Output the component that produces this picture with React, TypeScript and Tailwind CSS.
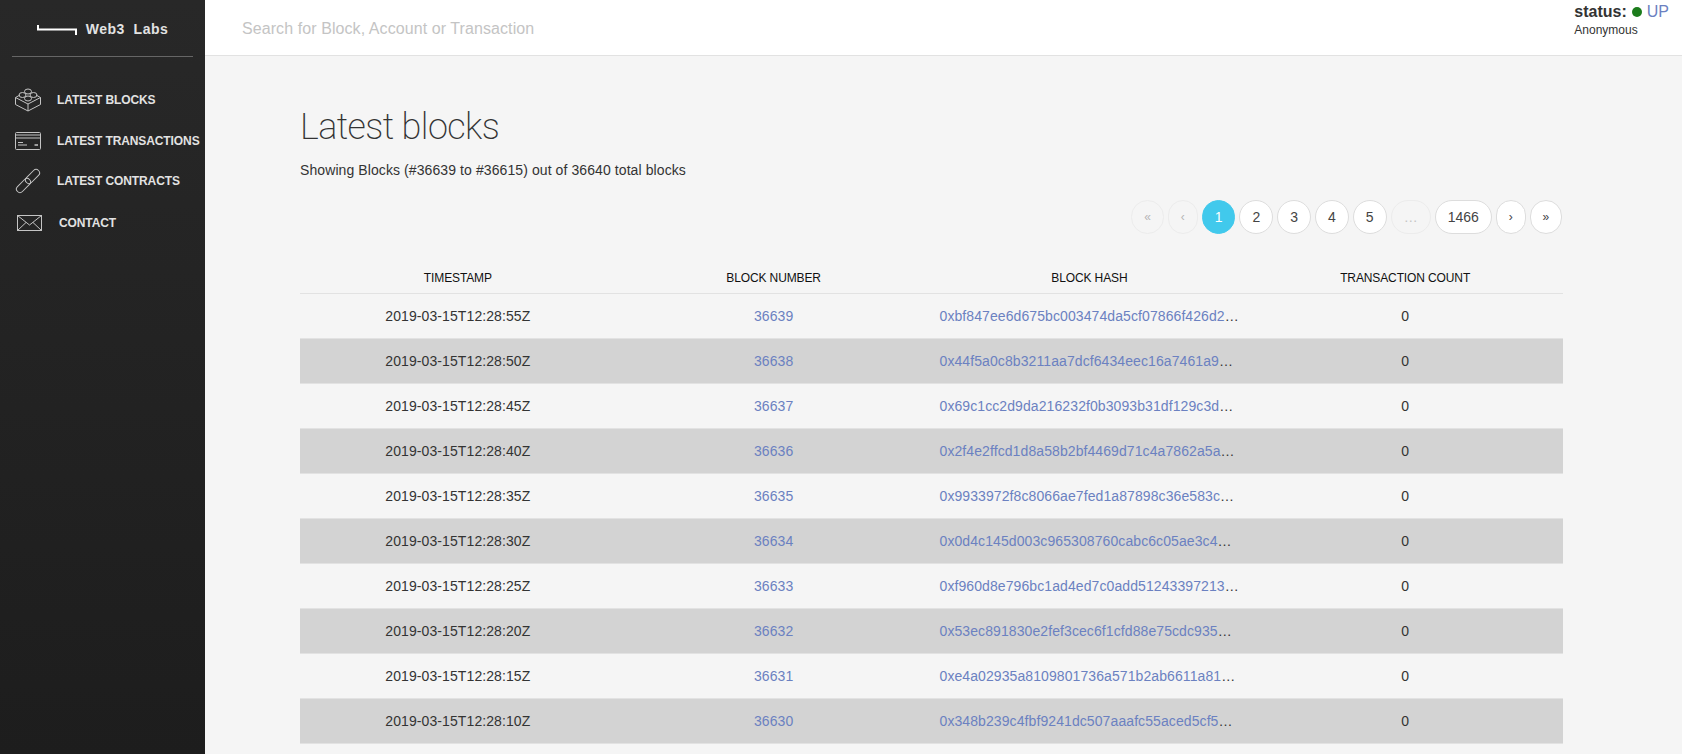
const blocks = [
  { time: "2019-03-15T12:28:55Z", number: 36639, hash: "0xbf847ee6d675bc003474da5cf07866f426d2" },
  { time: "2019-03-15T12:28:50Z", number: 36638, hash: "0x44f5a0c8b3211aa7dcf6434eec16a7461a9" },
  { time: "2019-03-15T12:28:45Z", number: 36637, hash: "0x69c1cc2d9da216232f0b3093b31df129c3d" },
  { time: "2019-03-15T12:28:40Z", number: 36636, hash: "0x2f4e2ffcd1d8a58b2bf4469d71c4a7862a5a" },
  { time: "2019-03-15T12:28:35Z", number: 36635, hash: "0x9933972f8c8066ae7fed1a87898c36e583c" },
  { time: "2019-03-15T12:28:30Z", number: 36634, hash: "0x0d4c145d003c965308760cabc6c05ae3c4" },
  { time: "2019-03-15T12:28:25Z", number: 36633, hash: "0xf960d8e796bc1ad4ed7c0add51243397213" },
  { time: "2019-03-15T12:28:20Z", number: 36632, hash: "0x53ec891830e2fef3cec6f1cfd88e75cdc935" },
  { time: "2019-03-15T12:28:15Z", number: 36631, hash: "0xe4a02935a8109801736a571b2ab6611a81" },
  { time: "2019-03-15T12:28:10Z", number: 36630, hash: "0x348b239c4fbf9241dc507aaafc55aced5cf5" },
];

function BrickIcon() {
  return (
    <svg width="28" height="24" viewBox="0 0 28 24" fill="none" stroke="#c4c4c4" strokeWidth="1">
      <path d="M1.500 9.500 14 16l12.500-6.500" />
      <path d="M1.500 9.500v7L14 23l12.500-6.500v-7" />
      <path d="M14 16v7" />
      <path d="M1.500 9.500 6 7M26.500 9.500 22 7" />
      <ellipse cx="14" cy="3.500" rx="3.500" ry="2.500" />
      <ellipse cx="8.500" cy="7" rx="3.500" ry="2.500" />
      <ellipse cx="19.500" cy="7" rx="3.500" ry="2.500" />
      <ellipse cx="14" cy="10.500" rx="3.500" ry="2.500" />
    </svg>
  );
}

function CardIcon() {
  return (
    <svg width="26" height="18" viewBox="0 0 26 18" fill="none" stroke="#c4c4c4" strokeWidth="1">
      <rect x="0.500" y="0.500" width="25" height="17" rx="1" />
      <path d="M0.500 3h25M0.500 6h25" />
      <path d="M3 10.500h5M3 13h9" />
      <path d="M19.500 13h3.500" strokeWidth="1.500" />
    </svg>
  );
}

function LinkIcon() {
  return (
    <svg width="26" height="26" viewBox="0 0 26 26" fill="none" stroke="#c4c4c4" strokeWidth="1">
      <rect x="-8.500" y="-3.500" width="17" height="7" rx="3.500" transform="translate(8.500 17.500) rotate(-45)" />
      <rect x="-8.500" y="-3.500" width="17" height="7" rx="3.500" transform="translate(17.500 8.500) rotate(-45)" />
    </svg>
  );
}

function MailIcon() {
  return (
    <svg width="25" height="16" viewBox="0 0 25 16" fill="none" stroke="#c4c4c4" strokeWidth="1">
      <rect x="0.500" y="0.500" width="24" height="15" />
      <path d="M0.500 0.500 12.500 10l12-9.500" />
      <path d="M0.500 15.500 9 7.500M24.500 15.500 16 7.500" />
    </svg>
  );
}

function NavItem({ icon, label, className }: { icon: React.ReactNode; label: string; className: string }) {
  return (
    <a className={`flex items-center text-[12px] font-bold tracking-[-0.1px] text-[#e2e2e2] whitespace-nowrap ${className}`}>
      <span className="flex w-[29px] justify-center">{icon}</span>
      <span>{label}</span>
    </a>
  );
}

function PageButton({ label, kind }: { label: string; kind?: "active" | "disabled" | "small" | "smallDisabled" }) {
  const styles = {
    active: "px-[12px] bg-[#41c9ec] border-[#41c9ec] text-white text-[14px]",
    disabled: "px-[12px] bg-[#f5f5f5] border-[#ececec] text-[#c4c4c4] text-[14px]",
    small: "px-[11.875px] bg-white border-[#dddddd] text-[#444444] text-[12px]",
    smallDisabled: "px-[11.875px] bg-[#f5f5f5] border-[#ececec] text-[#b5b5b5] text-[12px]",
  };
  return (
    <span
      className={`flex h-[34px] items-center justify-center rounded-full border ${
        kind ? styles[kind] : "px-[12px] bg-white border-[#dddddd] text-[#444444] text-[14px]"
      }`}
    >
      {label}
    </span>
  );
}

export default function App() {
  return (
    <div className="flex h-[754px] overflow-hidden bg-white pr-[3px] font-['Liberation_Sans',Arial,sans-serif] text-[14px] text-[#333333]">
      <aside className="h-full w-[205px] shrink-0 bg-gradient-to-b from-[#282828] to-[#1d1d1d]">
        <div className="mx-[12px] flex h-[57px] items-center justify-center gap-[9px] border-b border-[#666666] pr-[3px] pt-[3px]">
          <svg width="40" height="12" viewBox="0 0 40 12" fill="none" stroke="#ffffff" strokeWidth="2" className="ml-[3px] mt-[1px]">
            <path d="M1 1v4.500h38V11" />
          </svg>
          <span className="whitespace-pre text-[14px] font-bold tracking-[0.5px] text-[#e2e2e2]">Web3  Labs</span>
        </div>
        <nav className="mt-[22px] flex flex-col pl-[13px]">
          <NavItem icon={<BrickIcon />} label="LATEST BLOCKS" className="h-[41px] gap-[15px]" />
          <NavItem icon={<CardIcon />} label="LATEST TRANSACTIONS" className="h-[41px] gap-[15px]" />
          <NavItem icon={<LinkIcon />} label="LATEST CONTRACTS" className="h-[40px] gap-[15px]" />
          <NavItem icon={<MailIcon />} label="CONTACT" className="mt-[1px] h-[41px] gap-[15px] pl-[2px]" />
        </nav>
      </aside>

      <main className="flex h-full min-w-0 flex-1 flex-col overflow-hidden bg-[#f5f5f5]">
        <header className="flex h-[56px] shrink-0 items-start justify-between border-b border-[#e2e2e2] bg-white">
          <div className="pl-[37px] pt-[19px] text-[16px] leading-[20px] tracking-[0.08px] text-[#c4c4c4]">
            Search for Block, Account or Transaction
          </div>
          <div className="pr-[13px] pt-[3px]">
            <div className="flex items-center text-[16px] leading-[18px]">
              <span className="font-bold text-[#333333]">status:</span>
              <span className="ml-[5px] h-[10px] w-[10px] rounded-full bg-[#1c7c1c]" />
              <span className="ml-[5px] text-[#6b81c1]">UP</span>
            </div>
            <div className="mt-[1px] text-[12px] leading-[16px] text-[#333333]">Anonymous</div>
          </div>
        </header>

        <section className="pl-[95px] pr-[119px]">
          <h1 className="pt-[46px] font-['Roboto',sans-serif] text-[36px] font-extralight leading-[50px] tracking-[-0.6px] text-[#333333]">
            Latest blocks
          </h1>
          <p className="mt-[8px] leading-[20px] tracking-[0.09px]">Showing Blocks (#36639 to #36615) out of 36640 total blocks</p>

          <div className="mr-[1px] mt-[20px] flex justify-end gap-[4px]">
            <PageButton label="«" kind="smallDisabled" />
            <PageButton label="‹" kind="smallDisabled" />
            <PageButton label="1" kind="active" />
            <PageButton label="2" />
            <PageButton label="3" />
            <PageButton label="4" />
            <PageButton label="5" />
            <PageButton label="…" kind="disabled" />
            <PageButton label="1466" />
            <PageButton label="›" kind="small" />
            <PageButton label="»" kind="small" />
          </div>

          <table className="mt-[25px] w-full table-fixed border-b border-[#e2e2e2]">
            <thead>
              <tr className="text-[12px] tracking-[-0.12px] text-[#111111]">
                <th className="h-[34px] pt-[5px] font-normal">TIMESTAMP</th>
                <th className="h-[34px] pt-[5px] font-normal">BLOCK NUMBER</th>
                <th className="h-[34px] pt-[5px] font-normal">BLOCK HASH</th>
                <th className="h-[34px] pt-[5px] font-normal">TRANSACTION COUNT</th>
              </tr>
            </thead>
            <tbody className="tracking-[0.09px]">
              {blocks.map((block, index) => (
                <tr key={block.number} className={index % 2 === 1 ? "bg-[#d3d3d3]" : ""}>
                  <td className="h-[45px] border-t border-[#e2e2e2] pt-[2px] text-center">{block.time}</td>
                  <td className="h-[45px] border-t border-[#e2e2e2] pt-[2px] text-center text-[#6b81c1]">{block.number}</td>
                  <td className="h-[45px] whitespace-nowrap border-t border-[#e2e2e2] px-[8px] pt-[2px]">
                    <a className="text-[#6b81c1]">{block.hash}</a>…
                  </td>
                  <td className="h-[45px] border-t border-[#e2e2e2] pt-[2px] text-center">0</td>
                </tr>
              ))}
            </tbody>
          </table>
        </section>
      </main>
    </div>
  );
}
